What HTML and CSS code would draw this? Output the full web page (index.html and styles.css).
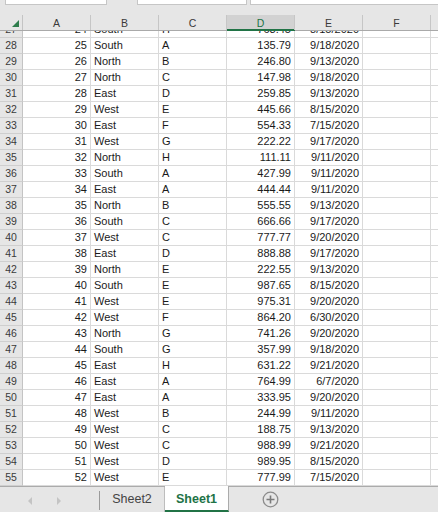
FILE: index.html
```html
<!DOCTYPE html>
<html>
<head>
<meta charset="utf-8">
<link rel="stylesheet" href="styles.css">
</head>
<body>
<div class="app">
  <div class="toolbar">
    <div class="box box-name"></div>
    <div class="box box-fx"></div>
    <div class="box box-formula"></div>
  </div>

  <div class="sheet">
    <div class="row head">
      <div class="rh corner"><span class="tri"></span></div>
      <div class="c ch">A</div>
      <div class="c ch">B</div>
      <div class="c ch">C</div>
      <div class="c ch sel">D</div>
      <div class="c ch">E</div>
      <div class="c ch">F</div>
      <div class="c ch rest"></div>
    </div>
    <div class="body">
      <div class="row first"><div class="rh">27</div><div class="c n">24</div><div class="c">South</div><div class="c">H</div><div class="c n">763.45</div><div class="c n">8/15/2020</div><div class="c"></div><div class="c rest"></div></div>
      <div class="row"><div class="rh">28</div><div class="c n">25</div><div class="c">South</div><div class="c">A</div><div class="c n">135.79</div><div class="c n">9/18/2020</div><div class="c"></div><div class="c rest"></div></div>
      <div class="row"><div class="rh">29</div><div class="c n">26</div><div class="c">North</div><div class="c">B</div><div class="c n">246.80</div><div class="c n">9/13/2020</div><div class="c"></div><div class="c rest"></div></div>
      <div class="row"><div class="rh">30</div><div class="c n">27</div><div class="c">North</div><div class="c">C</div><div class="c n">147.98</div><div class="c n">9/18/2020</div><div class="c"></div><div class="c rest"></div></div>
      <div class="row"><div class="rh">31</div><div class="c n">28</div><div class="c">East</div><div class="c">D</div><div class="c n">259.85</div><div class="c n">9/13/2020</div><div class="c"></div><div class="c rest"></div></div>
      <div class="row"><div class="rh">32</div><div class="c n">29</div><div class="c">West</div><div class="c">E</div><div class="c n">445.66</div><div class="c n">8/15/2020</div><div class="c"></div><div class="c rest"></div></div>
      <div class="row"><div class="rh">33</div><div class="c n">30</div><div class="c">East</div><div class="c">F</div><div class="c n">554.33</div><div class="c n">7/15/2020</div><div class="c"></div><div class="c rest"></div></div>
      <div class="row"><div class="rh">34</div><div class="c n">31</div><div class="c">West</div><div class="c">G</div><div class="c n">222.22</div><div class="c n">9/17/2020</div><div class="c"></div><div class="c rest"></div></div>
      <div class="row"><div class="rh">35</div><div class="c n">32</div><div class="c">North</div><div class="c">H</div><div class="c n">111.11</div><div class="c n">9/11/2020</div><div class="c"></div><div class="c rest"></div></div>
      <div class="row"><div class="rh">36</div><div class="c n">33</div><div class="c">South</div><div class="c">A</div><div class="c n">427.99</div><div class="c n">9/11/2020</div><div class="c"></div><div class="c rest"></div></div>
      <div class="row"><div class="rh">37</div><div class="c n">34</div><div class="c">East</div><div class="c">A</div><div class="c n">444.44</div><div class="c n">9/11/2020</div><div class="c"></div><div class="c rest"></div></div>
      <div class="row"><div class="rh">38</div><div class="c n">35</div><div class="c">North</div><div class="c">B</div><div class="c n">555.55</div><div class="c n">9/13/2020</div><div class="c"></div><div class="c rest"></div></div>
      <div class="row"><div class="rh">39</div><div class="c n">36</div><div class="c">South</div><div class="c">C</div><div class="c n">666.66</div><div class="c n">9/17/2020</div><div class="c"></div><div class="c rest"></div></div>
      <div class="row"><div class="rh">40</div><div class="c n">37</div><div class="c">West</div><div class="c">C</div><div class="c n">777.77</div><div class="c n">9/20/2020</div><div class="c"></div><div class="c rest"></div></div>
      <div class="row"><div class="rh">41</div><div class="c n">38</div><div class="c">East</div><div class="c">D</div><div class="c n">888.88</div><div class="c n">9/17/2020</div><div class="c"></div><div class="c rest"></div></div>
      <div class="row"><div class="rh">42</div><div class="c n">39</div><div class="c">North</div><div class="c">E</div><div class="c n">222.55</div><div class="c n">9/13/2020</div><div class="c"></div><div class="c rest"></div></div>
      <div class="row"><div class="rh">43</div><div class="c n">40</div><div class="c">South</div><div class="c">E</div><div class="c n">987.65</div><div class="c n">8/15/2020</div><div class="c"></div><div class="c rest"></div></div>
      <div class="row"><div class="rh">44</div><div class="c n">41</div><div class="c">West</div><div class="c">E</div><div class="c n">975.31</div><div class="c n">9/20/2020</div><div class="c"></div><div class="c rest"></div></div>
      <div class="row"><div class="rh">45</div><div class="c n">42</div><div class="c">West</div><div class="c">F</div><div class="c n">864.20</div><div class="c n">6/30/2020</div><div class="c"></div><div class="c rest"></div></div>
      <div class="row"><div class="rh">46</div><div class="c n">43</div><div class="c">North</div><div class="c">G</div><div class="c n">741.26</div><div class="c n">9/20/2020</div><div class="c"></div><div class="c rest"></div></div>
      <div class="row"><div class="rh">47</div><div class="c n">44</div><div class="c">South</div><div class="c">G</div><div class="c n">357.99</div><div class="c n">9/18/2020</div><div class="c"></div><div class="c rest"></div></div>
      <div class="row"><div class="rh">48</div><div class="c n">45</div><div class="c">East</div><div class="c">H</div><div class="c n">631.22</div><div class="c n">9/21/2020</div><div class="c"></div><div class="c rest"></div></div>
      <div class="row"><div class="rh">49</div><div class="c n">46</div><div class="c">East</div><div class="c">A</div><div class="c n">764.99</div><div class="c n">6/7/2020</div><div class="c"></div><div class="c rest"></div></div>
      <div class="row"><div class="rh">50</div><div class="c n">47</div><div class="c">East</div><div class="c">A</div><div class="c n">333.95</div><div class="c n">9/20/2020</div><div class="c"></div><div class="c rest"></div></div>
      <div class="row"><div class="rh">51</div><div class="c n">48</div><div class="c">West</div><div class="c">B</div><div class="c n">244.99</div><div class="c n">9/11/2020</div><div class="c"></div><div class="c rest"></div></div>
      <div class="row"><div class="rh">52</div><div class="c n">49</div><div class="c">West</div><div class="c">C</div><div class="c n">188.75</div><div class="c n">9/13/2020</div><div class="c"></div><div class="c rest"></div></div>
      <div class="row"><div class="rh">53</div><div class="c n">50</div><div class="c">West</div><div class="c">C</div><div class="c n">988.99</div><div class="c n">9/21/2020</div><div class="c"></div><div class="c rest"></div></div>
      <div class="row"><div class="rh">54</div><div class="c n">51</div><div class="c">West</div><div class="c">D</div><div class="c n">989.95</div><div class="c n">8/15/2020</div><div class="c"></div><div class="c rest"></div></div>
      <div class="row"><div class="rh">55</div><div class="c n">52</div><div class="c">West</div><div class="c">E</div><div class="c n">777.99</div><div class="c n">7/15/2020</div><div class="c"></div><div class="c rest"></div></div>
    </div>
  </div>

  <div class="tabs">
    <div class="nav">
      <svg class="arrow" width="6" height="8" viewBox="0 0 6 8"><path d="M5 0 L1 4 L5 8 Z" fill="#c4c4c4"/></svg>
      <svg class="arrow" width="6" height="8" viewBox="0 0 6 8"><path d="M1 0 L5 4 L1 8 Z" fill="#c4c4c4"/></svg>
    </div>
    <div class="tab">Sheet2</div>
    <div class="tab active">Sheet1</div>
    <div class="add">
      <svg width="17" height="17" viewBox="0 0 17 17"><circle cx="8.5" cy="8.5" r="7.3" fill="none" stroke="#8c8c8c" stroke-width="1.3"/><path d="M8.5 4.5 V12.5 M4.5 8.5 H12.5" stroke="#7a7a7a" stroke-width="1.6"/></svg>
    </div>
  </div>
</div>
</body>
</html>
```

FILE: styles.css
```css
html, body {
  margin: 0;
  padding: 0;
}
body {
  width: 438px;
  height: 512px;
  overflow: hidden;
  background: #e6e6e6;
  font-family: "Liberation Sans", Arial, sans-serif;
}
.app {
  width: 438px;
  height: 512px;
  display: flex;
  flex-direction: column;
  overflow: hidden;
}

/* top toolbar remnants */
.toolbar {
  height: 15px;
  display: flex;
  align-items: flex-start;
  flex: none;
}
.box {
  height: 4px;
  background: #fff;
  border: 1px solid #c6c6c6;
  border-top: none;
}
.box-name { margin-left: 5px; width: 100px; }
.box-fx { margin-left: 30px; width: 108px; }
.box-formula { margin-left: 3px; flex: 1; border-right: none; }

/* sheet grid */
.sheet {
  flex: none;
  background: #fff;
}
.row {
  display: flex;
  height: 15px;
  border-bottom: 1px solid #dadada;
}
.rh {
  width: 22px;
  flex: none;
  border-right: 1px solid #c4c4c4;
  background: #e6e6e6;
  color: #3a3a3a;
  font-size: 10.5px;
  line-height: 15px;
  text-align: center;
}
.body .row .rh {
  border-bottom: 1px solid #cfcfcf;
  height: 15px;
}
.c {
  flex: none;
  width: 68px;
  box-sizing: border-box;
  border-right: 1px solid #dadada;
  font-size: 11px;
  line-height: 15px;
  color: #1a1a1a;
  padding: 0 3px;
  white-space: nowrap;
  overflow: hidden;
}
.c.n { text-align: right; }
.c.rest { flex: 1; width: auto; border-right: none; }

.head {
  height: 15px;
  background: #e6e6e6;
  border-bottom: 1px solid #a9a9a9;
}
.ch {
  background: #e6e6e6;
  border-right: 1px solid #c6c6c6;
  text-align: center;
  color: #3a3a3a;
  font-size: 10.5px;
  line-height: 16px;
  overflow: visible;
}
.ch.sel {
  background: #d2d2d2;
  color: #217346;
  box-shadow: inset 0 -1px 0 #217346;
  position: relative;
}
.ch.sel::after {
  content: "";
  position: absolute;
  left: 0;
  right: -1px;
  bottom: -1px;
  height: 1px;
  background: #217346;
}
.corner { position: relative; }
.tri {
  position: absolute;
  left: 12px;
  top: 5px;
  width: 0;
  height: 0;
  border-left: 7px solid transparent;
  border-bottom: 7px solid #2f7d4c;
}

.body {
  height: 455px;
  overflow: hidden;
}
.row.first { margin-top: -9px; }

/* sheet tabs */
.tabs {
  flex: none;
  height: 25px;
  border-top: 1px solid #ababab;
  display: flex;
  align-items: stretch;
  background: #e6e6e6;
  font-size: 12.5px;
}
.nav {
  width: 100px;
  box-sizing: border-box;
  border-right: 1px solid #9a9a9a;
  margin: 4px 0 2px;
  display: flex;
  align-items: center;
  padding-left: 27px;
  gap: 23px;
}
.tab {
  width: 65px;
  box-sizing: border-box;
  border-right: 1px solid #bdbdbd;
  color: #444;
  text-align: center;
  line-height: 24px;
}
.tab.active {
  width: 64px;
  background: #fff;
  color: #217346;
  font-weight: bold;
  margin-top: -1px;
  height: 26px;
  line-height: 26px;
  border-bottom: 2px solid #217346;
  border-right: 1px solid #ababab;
}
.add {
  padding-left: 33px;
  display: flex;
  align-items: center;
}
.add svg { display: block; }
```
